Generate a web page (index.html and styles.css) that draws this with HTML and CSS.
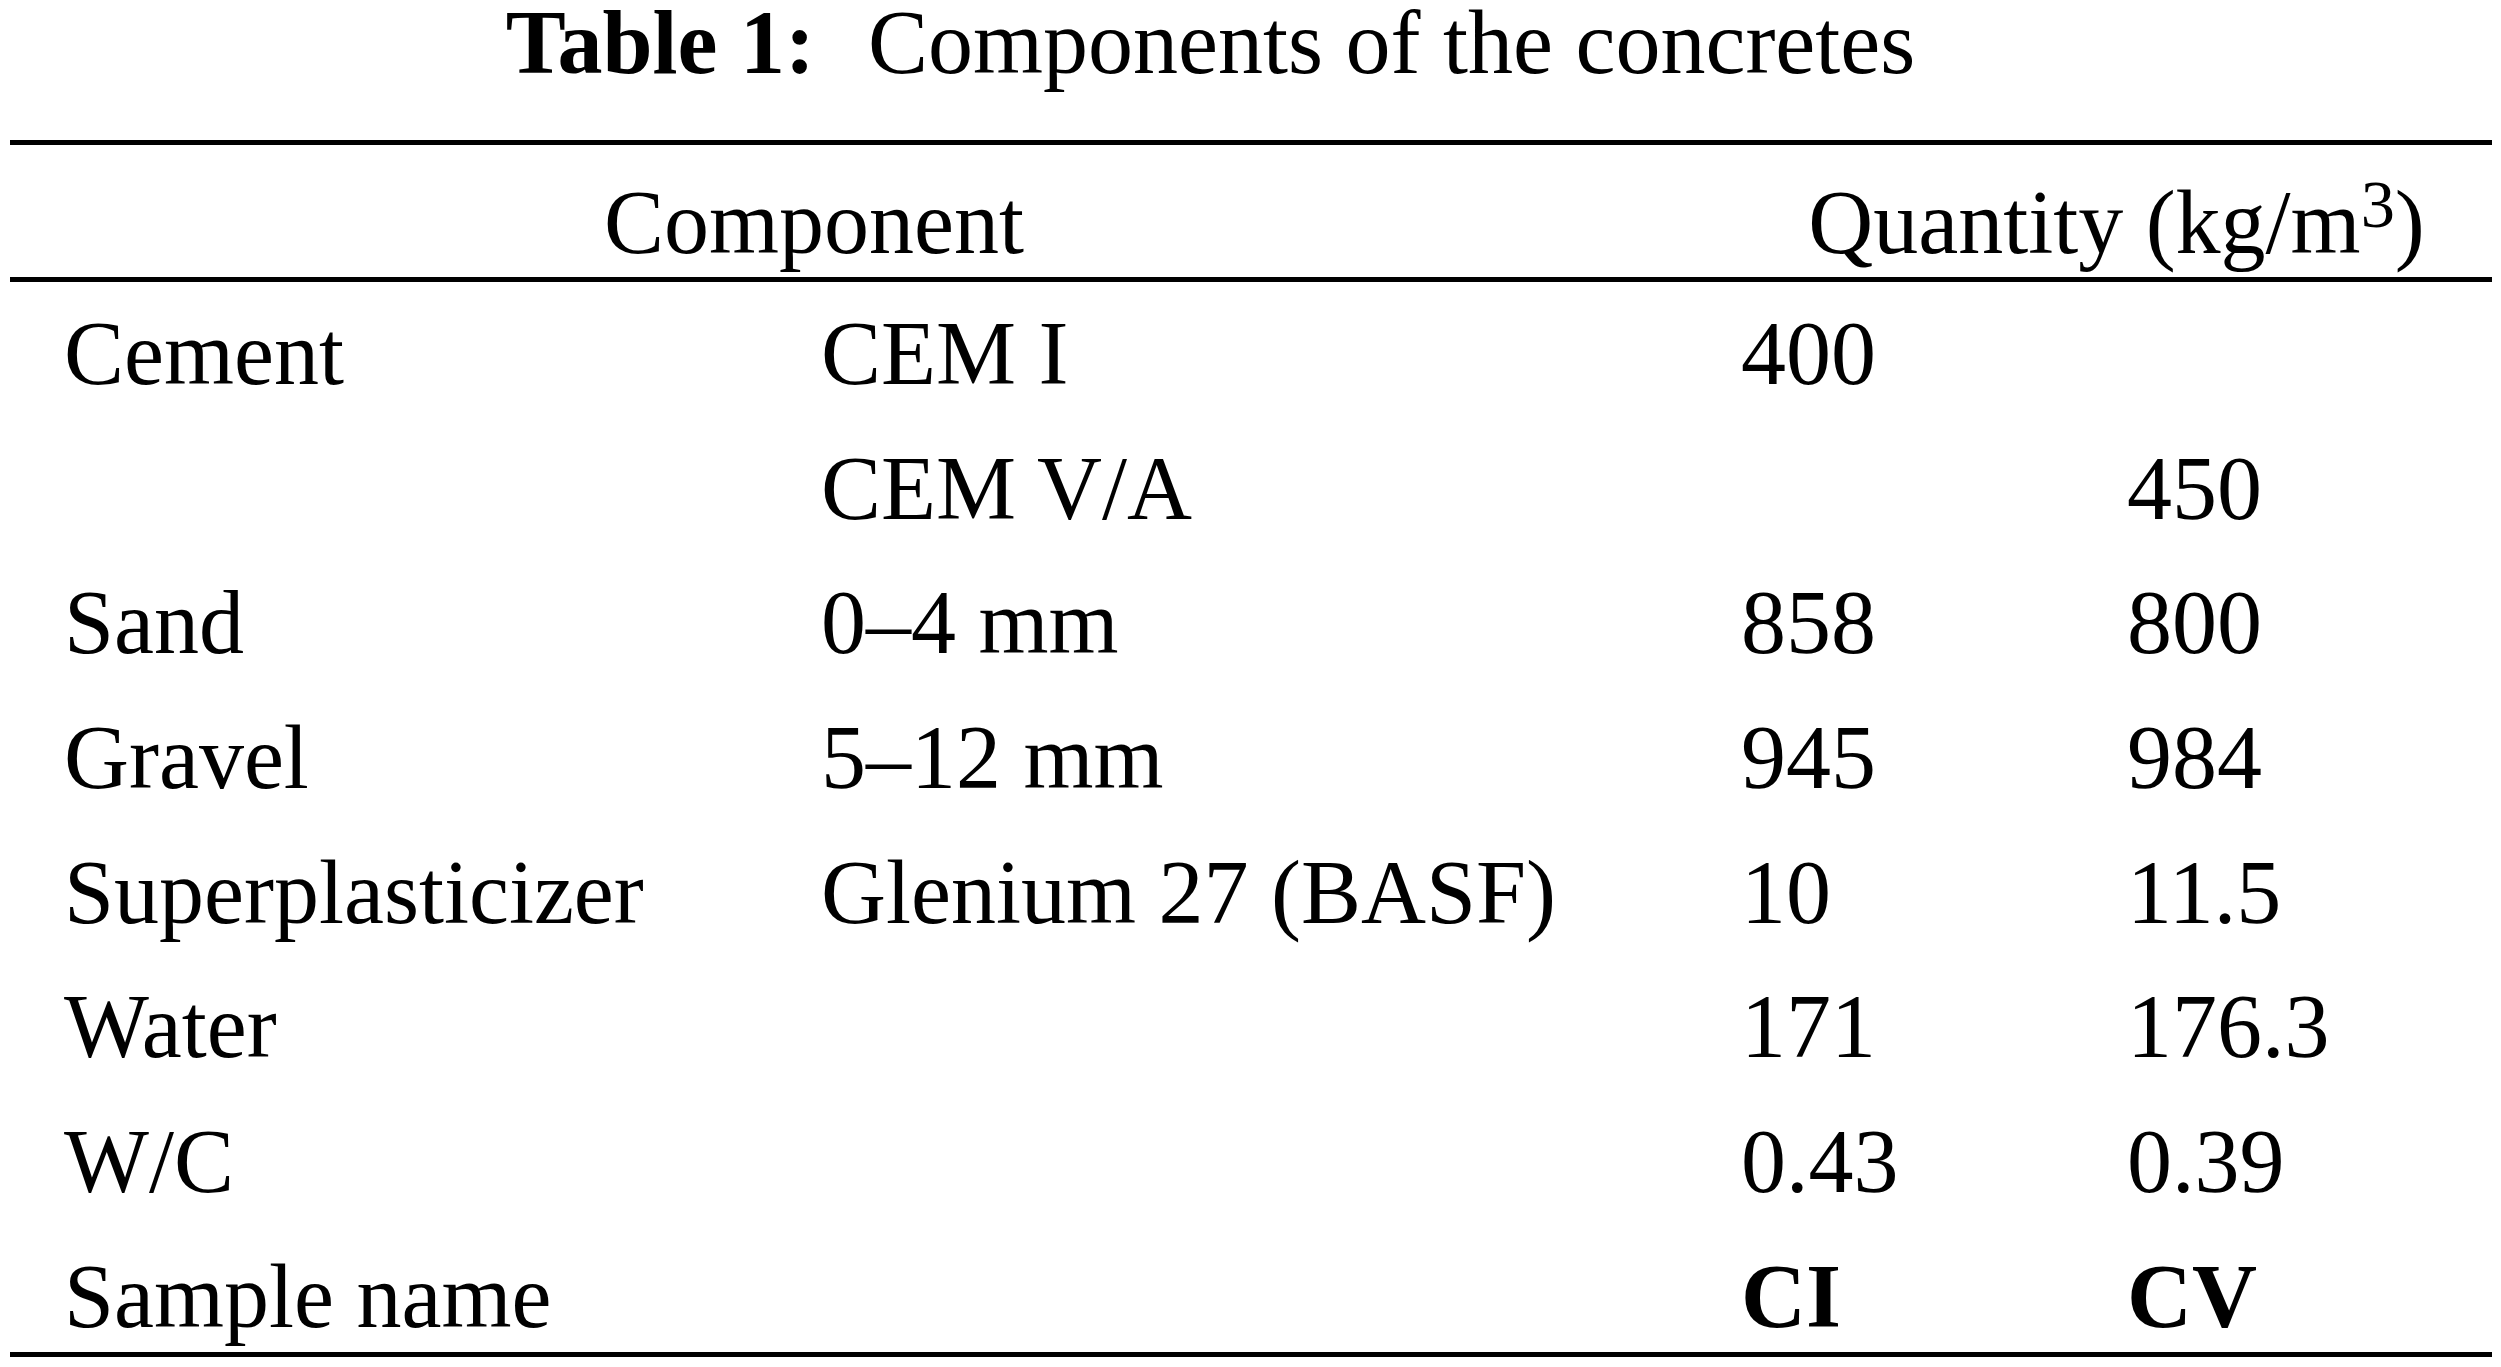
FILE: index.html
```html
<!DOCTYPE html>
<html lang="en">
<head>
<meta charset="utf-8">
<title>Table 1: Components of the concretes</title>
<link rel="stylesheet" href="styles.css">
</head>
<body>
  <div class="page">
    <h1 class="caption"><span class="caption-label">Table 1:</span> Components of the concretes</h1>
    <div class="table">
      <div class="thead">
        <div class="th th-component">Component</div>
        <div class="th th-quantity">Quantity (kg/m<sup class="sup">3</sup>)</div>
      </div>
      <div class="tbody">
        <div class="td">Cement</div><div class="td">CEM I</div><div class="td">400</div><div class="td"></div>
        <div class="td"></div><div class="td">CEM V/A</div><div class="td"></div><div class="td">450</div>
        <div class="td">Sand</div><div class="td">0–4 mm</div><div class="td">858</div><div class="td">800</div>
        <div class="td">Gravel</div><div class="td">5–12 mm</div><div class="td">945</div><div class="td">984</div>
        <div class="td">Superplasticizer</div><div class="td">Glenium 27 (BASF)</div><div class="td">10</div><div class="td">11.5</div>
        <div class="td">Water</div><div class="td"></div><div class="td">171</div><div class="td">176.3</div>
        <div class="td">W/C</div><div class="td"></div><div class="td">0.43</div><div class="td">0.39</div>
        <div class="td">Sample name</div><div class="td"></div><div class="td td-bold">CI</div><div class="td td-bold">CV</div>
      </div>
    </div>
  </div>
</body>
</html>
```

FILE: styles.css
```css
html, body {
  margin: 0;
  padding: 0;
  background: #ffffff;
}

.page {
  font-family: "Liberation Serif", "Times New Roman", serif;
  color: #000000;
  font-size: 90px;
}

.caption {
  margin: 6px 0 0 0;
  padding: 0 80px 0 0;
  font-size: 90px;
  font-weight: normal;
  line-height: 74px;
  text-align: center;
  white-space: nowrap;
}

.caption-label {
  font-weight: bold;
  margin-right: 0.34em;
}

.table {
  --cols: 757px 920px 386px 1fr;
  margin: 60px 9px 0 10px;
  border-top: 5px solid #000;
  border-bottom: 5px solid #000;
}

.thead {
  display: grid;
  grid-template-columns: var(--cols);
  padding: 28px 0 4px 54px;
  border-bottom: 5px solid #000;
  line-height: 100px;
}

.th {
  white-space: nowrap;
  text-align: center;
}

.th-component {
  grid-column: 1 / 3;
  padding-right: 177px;
}

.th-quantity {
  grid-column: 3 / 5;
}

.sup {
  font-size: 0.76em;
  line-height: 0;
  vertical-align: 26px;
}

.tbody {
  display: grid;
  grid-template-columns: var(--cols);
  row-gap: 34.7px;
  padding: 22px 0 5px 54px;
  line-height: 100px;
}

.td {
  white-space: nowrap;
  min-height: 100px;
}

.td-bold {
  font-weight: bold;
}
```
